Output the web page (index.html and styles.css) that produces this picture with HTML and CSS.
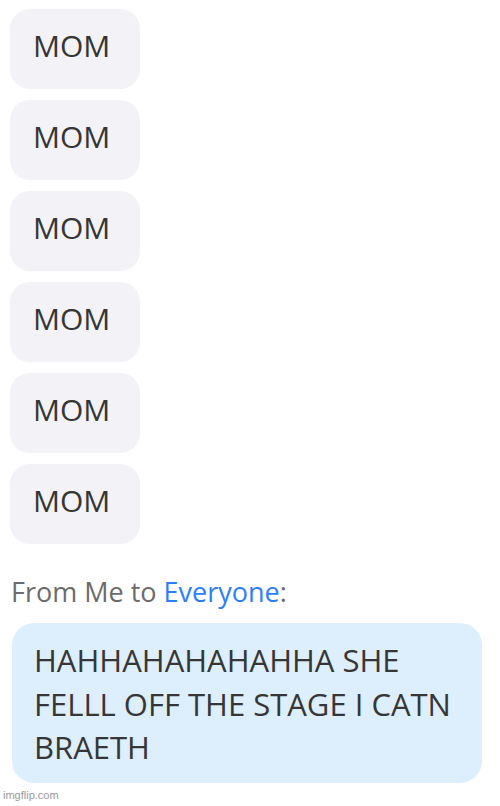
FILE: index.html
```html
<!DOCTYPE html>
<html>
<head>
<meta charset="utf-8">
<link rel="stylesheet" href="styles.css">
</head>
<body>
<div class="chat">
  <div class="bubble">MOM</div>
  <div class="bubble">MOM</div>
  <div class="bubble">MOM</div>
  <div class="bubble">MOM</div>
  <div class="bubble">MOM</div>
  <div class="bubble">MOM</div>
  <div class="from">From Me to <span class="to">Everyone</span>:</div>
  <div class="mine">HAHHAHAHAHAHHA SHE FELLL OFF THE STAGE I CATN BRAETH</div>
</div>
<div class="mark">imgflip.com</div>
</body>
</html>
```
FILE: styles.css
```css
html, body {
  margin: 0;
  padding: 0;
  background: #ffffff;
}
body {
  width: 500px;
  height: 806px;
  overflow: hidden;
  font-family: "Open Sans", "Noto Sans", sans-serif;
  position: relative;
}
.chat {
  display: flex;
  flex-direction: column;
  align-items: flex-start;
  gap: 11px;
  padding: 9px 18px 0 10px;
}
.bubble {
  background: #f3f3f7;
  border-radius: 20px;
  width: 130px;
  height: 80px;
  box-sizing: border-box;
  padding-left: 23px;
  padding-bottom: 8px;
  display: flex;
  align-items: center;
  font-size: 30px;
  color: #363636;
}
.from {
  margin-top: 19px;
  margin-left: 1px;
  font-size: 27px;
  line-height: 36px;
  color: #6b6b6b;
}
.to {
  color: #2d7ff9;
}
.mine {
  margin-top: 2px;
  margin-left: 2px;
  background: #ddeefd;
  border-radius: 22px;
  width: 470px;
  height: 160px;
  box-sizing: border-box;
  padding: 16px 18px 0 22px;
  font-size: 31px;
  line-height: 43.5px;
  color: #363636;
}
.mark {
  position: absolute;
  left: 3px;
  top: 789px;
  font-family: "Liberation Sans", Arial, sans-serif;
  font-size: 11px;
  color: #999999;
}
```
